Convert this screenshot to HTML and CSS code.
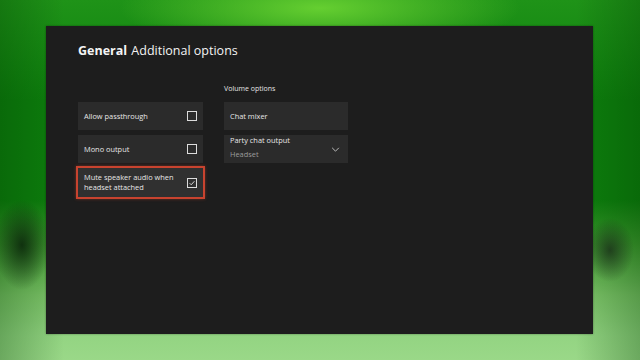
FILE: index.html
```html
<!DOCTYPE html>
<html>
<head>
<meta charset="utf-8">
<link rel="stylesheet" href="styles.css">
</head>
<body>
<div class="panel">
  <h1 class="title"><b>General</b> Additional options</h1>
  <div class="grid">
    <div class="label">Volume options</div>
    <div class="col col-left">
      <div class="tile"><span>Allow passthrough</span><span class="check"></span></div>
      <div class="tile"><span>Mono output</span><span class="check"></span></div>
      <div class="tile tile-focus"><span class="two">Mute speaker audio when<br>headset attached</span><span class="check checked"><svg viewBox="0 0 10 10" width="8" height="8"><path d="M2 5.2 L4 7.2 L8 2.8" fill="none" stroke="#e8e8e8" stroke-width="1.1"/></svg></span></div>
    </div>
    <div class="col col-right">
      <div class="tile"><span>Chat mixer</span></div>
      <div class="tile"><span class="two">Party chat output<br><span class="sub">Headset</span></span><svg class="chev" viewBox="0 0 10 6" width="9" height="5"><path d="M1 1 L5 5 L9 1" fill="none" stroke="#d8d8d8" stroke-width="1"/></svg></div>
    </div>
  </div>
</div>
</body>
</html>
```

FILE: styles.css
```css
html, body {
  margin: 0;
  width: 640px;
  height: 360px;
  overflow: hidden;
}
body {
  font-family: "Open Sans", "Noto Sans", sans-serif;
  background:
    radial-gradient(ellipse 200px 45px at 320px 8px, rgba(105, 210, 50, 0.95), rgba(105, 210, 50, 0) 100%),
    radial-gradient(ellipse 28px 45px at 22px 245px, rgba(12, 40, 12, 0.9), rgba(12, 40, 12, 0) 100%),
    radial-gradient(ellipse 24px 32px at 610px 250px, rgba(25, 45, 25, 0.8), rgba(25, 45, 25, 0) 100%),
    linear-gradient(to right, rgba(0, 60, 0, 0.3), rgba(0, 60, 0, 0) 10%, rgba(0, 60, 0, 0) 90%, rgba(0, 60, 0, 0.3)),
    linear-gradient(to bottom, #1f9318 0px, #0d7e0d 100px, #0d7e0d 200px, #3f9a30 245px, #7cc368 295px, #93d482 335px, #9ad888 360px);
  display: flex;
}
.panel {
  margin: 26px 0 0 46px;
  width: 547px;
  height: 308px;
  background: #1d1d1d;
  box-sizing: border-box;
  padding: 16px 32px;
  box-shadow: 0 0 2px rgba(0, 0, 0, 0.4);
}
.title {
  margin: 0;
  font-size: 12.5px;
  line-height: 17px;
  font-weight: 400;
  color: #f4f4f4;
}
.title b {
  font-weight: 700;
  margin-right: 1px;
}
.grid {
  display: grid;
  grid-template-columns: 125px 124px;
  grid-template-rows: 18px auto;
  column-gap: 21px;
  margin-top: 25px;
}
.label {
  grid-column: 2;
  grid-row: 1;
  font-size: 7px;
  line-height: 10px;
  color: #e4e4e4;
}
.col {
  grid-row: 2;
  display: flex;
  flex-direction: column;
  gap: 5px;
}
.col-left { grid-column: 1; }
.col-right { grid-column: 2; }
.tile {
  height: 28px;
  background: #2b2b2b;
  box-sizing: border-box;
  padding: 0 6px;
  display: flex;
  align-items: center;
  justify-content: space-between;
  font-size: 7.4px;
  line-height: 10px;
  color: #e6e6e6;
}
.tile-focus {
  height: 29px;
  background: #303030;
  box-shadow: 0 0 0 2px #c8432f, 0 0 3px 2px rgba(210, 70, 45, 0.45);
}
.two {
  line-height: 9.5px;
}
.sub {
  color: #9b9b9b;
  line-height: 16px;
}
.check {
  width: 8px;
  height: 8px;
  border: 1px solid #dcdcdc;
  display: flex;
  align-items: center;
  justify-content: center;
}
.chev {
  margin-right: 2px;
}
```
